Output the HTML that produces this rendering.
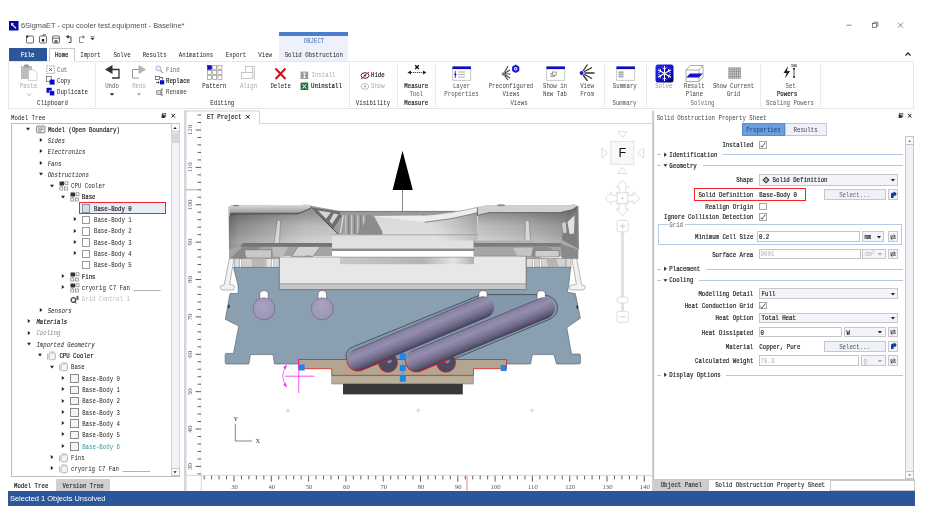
<!DOCTYPE html>
<html><head><meta charset="utf-8"><title>6SigmaET - cpu cooler test.equipment - Baseline*</title>
<style>
html,body{margin:0;padding:0;background:#fff;}
body{width:925px;height:511px;position:relative;overflow:hidden;filter:blur(0.5px);font-family:"Liberation Mono",monospace;}
.r{position:absolute;box-sizing:border-box;}
.t{position:absolute;height:8px;line-height:8px;font-size:5.72px;white-space:pre;font-family:"Liberation Mono",monospace;letter-spacing:0;transform:scaleY(1.33);transform-origin:50% 52%;}
.i{font-style:italic;}
.b{-webkit-text-stroke:0.16px currentColor;}
.s{font-family:"Liberation Sans",sans-serif;font-size:7px;transform:none;}
</style></head>
<body>
<svg class="r" style="left:9.0px;top:20.5px" width="10" height="10" viewBox="0 0 10 10"><rect x="0" y="0" width="9.5" height="9.5" fill="#0a0a9a"/><path d="M2 2 L5 2.5 L4 3.5 L7.5 7 L6.5 7.8 L3.2 4.3 L2.3 5.2 Z" fill="#fff"/></svg>
<span class="t s" style="left:21px;top:21.8px;color:#505050;font-size:7.4px">6SigmaET - cpu cooler test.equipment - Baseline*</span>
<svg class="r" style="left:840.0px;top:18.0px" width="70" height="14" viewBox="0 0 70 14"><g stroke="#555" stroke-width="0.7" fill="none"><path d="M6.5 7.2 H11.5"/><rect x="32.5" y="5.5" width="4" height="4"/><path d="M33.8 5.5 V4.2 H37.8 V8.2 H36.5"/><path d="M58 4.7 L63 9.7 M63 4.7 L58 9.7"/></g></svg>
<svg class="r" style="left:24.0px;top:33.0px" width="75" height="12" viewBox="0 0 75 12"><g stroke="#444" stroke-width="0.8" fill="none">
<rect x="2.5" y="3" width="7" height="7" rx="1"/><path d="M2 3.5 H4.5 M3.2 2 V5" stroke="#222"/>
<rect x="15.5" y="3" width="7" height="7" rx="1"/><path d="M19 3 V1.8 H22" /><rect x="17.8" y="6" width="2.4" height="2.6" fill="#222" stroke="none"/>
<rect x="28.5" y="3" width="7" height="7" rx="1"/><path d="M28.5 5.3 H35.5"/><rect x="30.5" y="7" width="3" height="3" fill="#666" stroke="none"/>
<path d="M43.5 3.8 H47 V9.5 H44.5" stroke="#222"/><path d="M44.6 1.8 L42 3.8 L44.6 5.8 Z" fill="#222" stroke="none"/>
<path d="M59 4 H55.5 V9.5 H59.5" stroke="#777"/><path d="M58.6 2 L61 4 L58.6 6 Z" fill="#777" stroke="none"/>
</g><path d="M66.5 5 H70.5 L68.5 7.3 Z M66.5 3.6 H70.5 V4.3 H66.5Z" fill="#333"/></svg>
<div class="r" style="left:279.3px;top:32.3px;width:69.2px;height:3.5px;background:#4a7fd0;"></div>
<div class="r" style="left:279.3px;top:35.8px;width:69.2px;height:25.2px;background:#eef1fb;"></div>
<span class="t " style="top:38.1px;color:#3a6ab8;left:214.0px;width:200px;text-align:center;">OBJECT</span>
<div class="r" style="left:8.5px;top:48.0px;width:38.0px;height:13.0px;background:#2b579a;"></div>
<span class="t b" style="top:52.3px;color:#fff;left:-72.5px;width:200px;text-align:center;">File</span>
<div class="r" style="left:49.0px;top:48.0px;width:25.5px;height:14.0px;background:#fff;border:0.7px solid #c8c8c8;border-bottom:none;"></div>
<span class="t b" style="top:52.3px;color:#222;left:-38.3px;width:200px;text-align:center;">Home</span>
<span class="t " style="top:52.3px;color:#222;left:-9.5px;width:200px;text-align:center;">Import</span>
<span class="t " style="top:52.3px;color:#222;left:22.0px;width:200px;text-align:center;">Solve</span>
<span class="t " style="top:52.3px;color:#222;left:54.7px;width:200px;text-align:center;">Results</span>
<span class="t " style="top:52.3px;color:#222;left:96.0px;width:200px;text-align:center;">Animations</span>
<span class="t " style="top:52.3px;color:#222;left:136.0px;width:200px;text-align:center;">Export</span>
<span class="t " style="top:52.3px;color:#222;left:165.2px;width:200px;text-align:center;">View</span>
<span class="t " style="top:52.3px;color:#222;left:213.8px;width:200px;text-align:center;">Solid Obstruction</span>
<svg class="r" style="left:903.2px;top:50.0px" width="10" height="8" viewBox="0 0 10 8"><path d="M2.5 5.6 L5 3 L7.5 5.6" stroke="#222" stroke-width="1.3" fill="none"/></svg>
<div class="r" style="left:8.2px;top:61.3px;width:905.8px;height:47.3px;background:#fff;border:0.7px solid #e6e6e6;"></div>
<div class="r" style="left:49.5px;top:60.8px;width:24.5px;height:1.5px;background:#fff;"></div>
<div class="r" style="left:95.0px;top:63.0px;width:0.7px;height:44.0px;background:#ebebeb;"></div>
<div class="r" style="left:349.4px;top:63.0px;width:0.7px;height:44.0px;background:#ebebeb;"></div>
<div class="r" style="left:397.0px;top:63.0px;width:0.7px;height:44.0px;background:#ebebeb;"></div>
<div class="r" style="left:435.0px;top:63.0px;width:0.7px;height:44.0px;background:#ebebeb;"></div>
<div class="r" style="left:603.5px;top:63.0px;width:0.7px;height:44.0px;background:#ebebeb;"></div>
<div class="r" style="left:645.6px;top:63.0px;width:0.7px;height:44.0px;background:#ebebeb;"></div>
<div class="r" style="left:759.6px;top:63.0px;width:0.7px;height:44.0px;background:#ebebeb;"></div>
<div class="r" style="left:820.0px;top:63.0px;width:0.7px;height:44.0px;background:#ebebeb;"></div>
<svg class="r" style="left:20.0px;top:63.0px" width="20" height="20" viewBox="0 0 20 20"><rect x="1" y="3" width="11" height="13" fill="#bdbdbd"/><rect x="4" y="1.5" width="5" height="3" rx="1" fill="#9a9a9a"/>
<path d="M8.5 7 H14 L17 10 V17.5 H8.5 Z" fill="#fff" stroke="#c0c0c0" stroke-width="0.7"/></svg>
<span class="t " style="top:82.6px;color:#aaa;left:-71.5px;width:200px;text-align:center;">Paste</span>
<svg class="r" style="left:25.5px;top:92.0px" width="6" height="5" viewBox="0 0 6 5"><path d="M1 1.5 L3 3.8 L5 1.5" fill="none" stroke="#aaa" stroke-width="0.8"/></svg>
<svg class="r" style="left:46.0px;top:64.5px" width="10" height="10" viewBox="0 0 10 10"><rect x="0.8" y="0.8" width="7.6" height="7.6" fill="#fff" stroke="#777" stroke-width="0.7" stroke-dasharray="1.2 0.8"/><path d="M3.3 3.3 L5.9 5.9 M5.9 3.3 L3.3 5.9" stroke="#d02020" stroke-width="1"/></svg>
<span class="t " style="top:66.5px;color:#666;left:57.0px;">Cut</span>
<svg class="r" style="left:46.0px;top:76.0px" width="10" height="10" viewBox="0 0 10 10"><rect x="0.6" y="0.6" width="4.6" height="5" fill="#fff" stroke="#555" stroke-width="0.7"/><rect x="3.6" y="3.6" width="5" height="5" fill="#0a0acc"/></svg>
<span class="t " style="top:78.1px;color:#222;left:57.0px;">Copy</span>
<svg class="r" style="left:46.0px;top:87.0px" width="10" height="10" viewBox="0 0 10 10"><rect x="0.5" y="0.8" width="5.2" height="5" fill="#0a0acc"/><rect x="3.6" y="3.8" width="5" height="5" fill="#0a0acc" stroke="#fff" stroke-width="0.5"/></svg>
<span class="t " style="top:89.1px;color:#222;left:57.0px;">Duplicate</span>
<span class="t " style="top:100.2px;color:#222;left:-47.5px;width:200px;text-align:center;">Clipboard</span>
<svg class="r" style="left:103.0px;top:64.0px" width="18" height="17" viewBox="0 0 18 17"><path d="M9 5.5 H16 V14 H9" fill="none" stroke="#333" stroke-width="1.3"/><path d="M9.5 1 L2 5.5 L9.5 10 Z" fill="#333"/></svg>
<span class="t " style="top:82.6px;color:#555;left:12.0px;width:200px;text-align:center;">Undo</span>
<svg class="r" style="left:109.0px;top:92.0px" width="6" height="5" viewBox="0 0 6 5"><path d="M0.8 1.2 H5.2 L3 3.8 Z" fill="#222"/></svg>
<svg class="r" style="left:130.0px;top:64.0px" width="18" height="17" viewBox="0 0 18 17"><path d="M9 5.5 H2.5 V14 H9" fill="none" stroke="#999" stroke-width="1"/><path d="M9 1.5 L15.5 5.5 L9 9.5 Z" fill="#b4b4b4" stroke="#aaa" stroke-width="0.6"/></svg>
<span class="t " style="top:82.6px;color:#aaa;left:39.0px;width:200px;text-align:center;">Redo</span>
<svg class="r" style="left:136.0px;top:92.0px" width="6" height="5" viewBox="0 0 6 5"><path d="M0.8 1.2 H5.2 L3 3.8 Z" fill="#aaa"/></svg>
<svg class="r" style="left:155.0px;top:65.0px" width="9" height="9" viewBox="0 0 9 9"><circle cx="3.4" cy="3.4" r="2.5" fill="#e8f0ff" stroke="#8aa8d8" stroke-width="0.8"/><path d="M5.3 5.3 L8 8" stroke="#999" stroke-width="1.1"/></svg>
<span class="t " style="top:66.5px;color:#666;left:166.0px;">Find</span>
<svg class="r" style="left:154.5px;top:76.0px" width="10" height="10" viewBox="0 0 10 10"><rect x="0.5" y="0.5" width="4" height="3" fill="#fff" stroke="#444" stroke-width="0.7"/><rect x="5" y="4.2" width="4.2" height="4.2" fill="#0a0acc"/><path d="M5 1.5 H7.5 V3.5 M1 6.5 H4 M3 5.3 L4.3 6.5 L3 7.7" stroke="#222" stroke-width="0.7" fill="none"/></svg>
<span class="t b" style="top:78.3px;color:#222;left:166.0px;">Replace</span>
<svg class="r" style="left:156.0px;top:88.0px" width="8" height="8" viewBox="0 0 8 8"><rect x="0.8" y="2.8" width="4" height="3.6" fill="#ddd" stroke="#555" stroke-width="0.6"/><path d="M5.8 1 V7.2 M4.8 1 H6.8 M4.8 7.2 H6.8" stroke="#333" stroke-width="0.6"/></svg>
<span class="t " style="top:89.0px;color:#444;left:166.0px;">Rename</span>
<svg class="r" style="left:207.0px;top:65.0px" width="16" height="16" viewBox="0 0 16 16"><rect x="0.5" y="0.5" width="4" height="3.8" fill="#0a0acc" stroke="#0a0acc" stroke-width="0.6"/><rect x="0.5" y="5.5" width="4" height="3.8" fill="#fff" stroke="#888" stroke-width="0.6"/><rect x="0.5" y="10.5" width="4" height="3.8" fill="#fff" stroke="#888" stroke-width="0.6"/><rect x="5.7" y="0.5" width="4" height="3.8" fill="#fff" stroke="#888" stroke-width="0.6"/><rect x="5.7" y="5.5" width="4" height="3.8" fill="#fff" stroke="#888" stroke-width="0.6"/><rect x="5.7" y="10.5" width="4" height="3.8" fill="#fff" stroke="#888" stroke-width="0.6"/><rect x="10.9" y="0.5" width="4" height="3.8" fill="#fff" stroke="#888" stroke-width="0.6"/><rect x="10.9" y="5.5" width="4" height="3.8" fill="#fff" stroke="#888" stroke-width="0.6"/><rect x="10.9" y="10.5" width="4" height="3.8" fill="#fff" stroke="#888" stroke-width="0.6"/></svg>
<span class="t " style="top:82.6px;color:#222;left:114.3px;width:200px;text-align:center;">Pattern</span>
<svg class="r" style="left:240.0px;top:65.0px" width="16" height="16" viewBox="0 0 16 16"><rect x="5.5" y="1.5" width="7" height="6" fill="#fff" stroke="#bbb" stroke-width="0.8"/><rect x="1.5" y="7.5" width="11" height="6" fill="#fff" stroke="#bbb" stroke-width="0.8"/><path d="M14.3 0.5 V15" stroke="#bbb" stroke-width="0.9"/></svg>
<span class="t " style="top:82.6px;color:#aaa;left:148.5px;width:200px;text-align:center;">Align</span>
<svg class="r" style="left:274.0px;top:66.5px" width="14" height="14" viewBox="0 0 14 14"><path d="M1.5 1.5 L11.5 12 M11.5 1.5 L1.5 12" stroke="#c01818" stroke-width="2.1"/></svg>
<span class="t " style="top:82.6px;color:#222;left:180.7px;width:200px;text-align:center;">Delete</span>
<svg class="r" style="left:300.0px;top:71.0px" width="9" height="9" viewBox="0 0 9 9"><rect x="0.6" y="0.6" width="7.6" height="7.4" fill="#999"/><path d="M3 2.2 H5.8 M4.4 2.2 V6.4 M3 6.4 H5.8" stroke="#fff" stroke-width="0.9"/></svg>
<span class="t " style="top:72.1px;color:#aaa;left:311.5px;">Install</span>
<svg class="r" style="left:300.0px;top:82.3px" width="9" height="9" viewBox="0 0 9 9"><rect x="0.6" y="0.6" width="7.6" height="7.4" fill="#1e7a3c"/><path d="M2.6 2.3 L6.2 6.5 M6.2 2.3 L2.6 6.5" stroke="#fff" stroke-width="1"/></svg>
<span class="t b" style="top:83.3px;color:#222;left:311.0px;">Uninstall</span>
<span class="t " style="top:100.2px;color:#222;left:122.3px;width:200px;text-align:center;">Editing</span>
<svg class="r" style="left:359.5px;top:70.5px" width="10" height="9" viewBox="0 0 10 9"><ellipse cx="5" cy="4.5" rx="4" ry="2.8" fill="none" stroke="#222" stroke-width="0.9"/><circle cx="5" cy="4.5" r="1.1" fill="#222"/><path d="M1 8 L9 1" stroke="#d02020" stroke-width="1"/></svg>
<span class="t b" style="top:72.1px;color:#222;left:371.0px;">Hide</span>
<svg class="r" style="left:359.5px;top:81.8px" width="10" height="9" viewBox="0 0 10 9"><ellipse cx="5" cy="4.5" rx="4" ry="2.8" fill="none" stroke="#aaa" stroke-width="0.8"/><circle cx="5" cy="4.5" r="1.1" fill="#aaa"/></svg>
<span class="t " style="top:83.3px;color:#aaa;left:371.0px;">Show</span>
<span class="t " style="top:100.2px;color:#222;left:273.0px;width:200px;text-align:center;">Visibility</span>
<svg class="r" style="left:406.0px;top:64.0px" width="22" height="14" viewBox="0 0 22 14"><path d="M3 8.5 H19" stroke="#222" stroke-width="0.8" stroke-dasharray="1.3 0.7"/><path d="M1.5 8.5 L5 6.5 V10.5 Z M20.5 8.5 L17 6.5 V10.5 Z" fill="#222"/><path d="M9.2 1.2 L12.8 5 M12.8 1.2 L9.2 5" stroke="#111" stroke-width="1.3"/></svg>
<span class="t b" style="top:82.6px;color:#222;left:316.3px;width:200px;text-align:center;">Measure</span>
<span class="t " style="top:90.6px;color:#555;left:316.3px;width:200px;text-align:center;">Tool</span>
<span class="t b" style="top:100.2px;color:#222;left:316.3px;width:200px;text-align:center;">Measure</span>
<svg class="r" style="left:452.0px;top:65.5px" width="20" height="16" viewBox="0 0 20 16"><rect x="0.7" y="0.7" width="18" height="13.6" fill="#fff" stroke="#bbb" stroke-width="0.8"/><rect x="0.5" y="0.5" width="18.4" height="2.6" fill="#0a0acc"/><path d="M6 6 H13 M6 8.5 H13 M6 11 H13" stroke="#999" stroke-width="0.8"/><path d="M3.3 5 V12" stroke="#0a0acc" stroke-width="0.8"/><rect x="2.5" y="7.5" width="1.8" height="1.8" fill="#0a0acc"/></svg>
<span class="t " style="top:82.6px;color:#555;left:361.5px;width:200px;text-align:center;">Layer</span>
<span class="t " style="top:90.6px;color:#555;left:361.5px;width:200px;text-align:center;">Properties</span>
<svg class="r" style="left:500.0px;top:63.0px" width="22" height="18" viewBox="0 0 22 18"><g stroke="#444" stroke-width="1.1"><path d="M4.5 9.5 L8 3 M5 10 L10 7 M5 11 L10.5 11 M5 12 L10 15 M4.5 12.5 L8 17"/></g><circle cx="3.5" cy="11" r="1.8" fill="#777"/>
<polygon points="15.7,1.6 19.3,3.7 19.3,7.9 15.7,10 12.1,7.9 12.1,3.7" fill="#1a1ae0"/><circle cx="15.7" cy="5.8" r="1.7" fill="#fff"/><circle cx="15.7" cy="5.8" r="0.8" fill="#1a1ae0"/></svg>
<span class="t " style="top:82.6px;color:#444;left:411.0px;width:200px;text-align:center;">Preconfigured</span>
<span class="t " style="top:90.6px;color:#444;left:411.0px;width:200px;text-align:center;">Views</span>
<svg class="r" style="left:545.5px;top:65.5px" width="20" height="16" viewBox="0 0 20 16"><rect x="0.7" y="0.7" width="18" height="13.6" fill="#fff" stroke="#bbb" stroke-width="0.8"/><rect x="0.5" y="0.5" width="18.4" height="2.6" fill="#0a0acc"/><rect x="5" y="7.5" width="3.6" height="3.2" fill="none" stroke="#777" stroke-width="0.7"/><rect x="6.5" y="6" width="3.6" height="3.2" fill="#fff" stroke="#777" stroke-width="0.7"/></svg>
<span class="t " style="top:82.6px;color:#444;left:455.0px;width:200px;text-align:center;">Show in</span>
<span class="t " style="top:90.6px;color:#444;left:455.0px;width:200px;text-align:center;">New Tab</span>
<svg class="r" style="left:578.0px;top:63.0px" width="20" height="18" viewBox="0 0 20 18"><g stroke="#333" stroke-width="1.3"><path d="M5 8 L9.5 1.5 M6 8.8 L14 4.5 M6.5 10 L16.5 10 M6 11.2 L14 15.5 M5 12 L9.5 18"/></g><circle cx="3.6" cy="10" r="2" fill="#1a1ae0"/></svg>
<span class="t " style="top:82.6px;color:#444;left:487.0px;width:200px;text-align:center;">View</span>
<span class="t " style="top:90.6px;color:#444;left:487.0px;width:200px;text-align:center;">From</span>
<span class="t " style="top:100.2px;color:#444;left:419.0px;width:200px;text-align:center;">Views</span>
<svg class="r" style="left:615.5px;top:65.5px" width="20" height="16" viewBox="0 0 20 16"><rect x="0.7" y="0.7" width="18" height="13.6" fill="#fff" stroke="#bbb" stroke-width="0.8"/><rect x="0.5" y="0.5" width="18.4" height="2.6" fill="#0a0acc"/><rect x="2.5" y="5" width="5" height="7" fill="#ccc"/><path d="M2.5 6.5 H7.5 M2.5 8.5 H7.5 M2.5 10.5 H7.5" stroke="#999" stroke-width="0.6"/></svg>
<span class="t " style="top:82.6px;color:#444;left:524.8px;width:200px;text-align:center;">Summary</span>
<span class="t " style="top:100.2px;color:#555;left:524.5px;width:200px;text-align:center;">Summary</span>
<svg class="r" style="left:654.5px;top:63.5px" width="20" height="20" viewBox="0 0 20 20"><defs><linearGradient id="sg" x1="0" y1="0" x2="1" y2="1"><stop offset="0" stop-color="#2a2af0"/><stop offset="0.6" stop-color="#1010c0"/><stop offset="1" stop-color="#000050"/></linearGradient></defs>
<rect x="0.5" y="0.5" width="18" height="18" rx="2.5" fill="url(#sg)"/>
<g stroke="#fff" stroke-width="1.1" fill="none"><path d="M9.5 2 V17 M3 5.8 L16 13.2 M16 5.8 L3 13.2"/><path d="M7.5 3.6 L9.5 5.4 L11.5 3.6 M7.5 15.4 L9.5 13.6 L11.5 15.4 M3.4 8.6 L5.8 7.4 L5.2 4.8 M15.6 8.6 L13.2 7.4 L13.8 4.8 M3.4 10.4 L5.8 11.6 L5.2 14.2 M15.6 10.4 L13.2 11.6 L13.8 14.2" stroke-width="0.8"/></g></svg>
<span class="t " style="top:82.6px;color:#999;left:563.8px;width:200px;text-align:center;">Solve</span>
<svg class="r" style="left:685.0px;top:63.5px" width="20" height="19" viewBox="0 0 20 19"><g stroke="#888" stroke-width="0.7" fill="#fff"><path d="M1 6 L5 1.5 H18 V13 L14 17.5 H1 Z"/><path d="M1 6 H14 V17.5 M14 6 L18 1.5" fill="none"/></g><path d="M1.3 13.5 L5 9.5 H17.7 L14 13.5 Z" fill="#1010d0"/></svg>
<span class="t " style="top:82.6px;color:#444;left:594.3px;width:200px;text-align:center;">Result</span>
<span class="t " style="top:90.6px;color:#444;left:594.3px;width:200px;text-align:center;">Plane</span>
<svg class="r" style="left:727.5px;top:66.8px" width="13" height="12" viewBox="0 0 13 12"><g stroke="#858585" stroke-width="0.8"><path d="M1.0 0.5 V11.5" /><path d="M2.9 0.5 V11.5" /><path d="M4.8 0.5 V11.5" /><path d="M6.7 0.5 V11.5" /><path d="M8.6 0.5 V11.5" /><path d="M10.5 0.5 V11.5" /><path d="M12.4 0.5 V11.5" /><path d="M0.5 1.0 H12.5" /><path d="M0.5 2.7 H12.5" /><path d="M0.5 4.4 H12.5" /><path d="M0.5 6.1 H12.5" /><path d="M0.5 7.8 H12.5" /><path d="M0.5 9.5 H12.5" /><path d="M0.5 11.2 H12.5" /></g></svg>
<span class="t " style="top:82.6px;color:#444;left:633.5px;width:200px;text-align:center;">Show Current</span>
<span class="t " style="top:90.6px;color:#444;left:633.5px;width:200px;text-align:center;">Grid</span>
<span class="t " style="top:100.2px;color:#666;left:602.5px;width:200px;text-align:center;">Solving</span>
<svg class="r" style="left:781.0px;top:63.5px" width="18" height="16" viewBox="0 0 18 16"><path d="M7 2 L2.5 9 H5.5 L4 14.5 L9 7 H6 Z" fill="#222"/><path d="M13 4.5 V13" stroke="#222" stroke-width="0.8"/><circle cx="13" cy="4.8" r="1" fill="#222"/><circle cx="13" cy="13" r="1" fill="#222"/><text x="10" y="3.2" font-size="3.6" font-family="Liberation Sans,sans-serif" font-weight="bold" fill="#222">100</text></svg>
<span class="t " style="top:82.6px;color:#555;left:690.7px;width:200px;text-align:center;">Set</span>
<span class="t b" style="top:90.6px;color:#222;left:687.2px;width:200px;text-align:center;">Powers</span>
<span class="t " style="top:100.2px;color:#555;left:690.0px;width:200px;text-align:center;">Scaling Powers</span>
<span class="t " style="top:114.6px;color:#222;left:11.0px;">Model Tree</span>
<svg class="r" style="left:160.0px;top:111.6px" width="20" height="8" viewBox="0 0 20 8"><rect x="1.6" y="2.6" width="3.2" height="3.4" fill="#333"/><rect x="2.6" y="1.4" width="3.2" height="3.4" fill="none" stroke="#333" stroke-width="0.6"/><path d="M11.5 1.8 L15 5.6 M15 1.8 L11.5 5.6" stroke="#222" stroke-width="1"/></svg>
<div class="r" style="left:11.3px;top:122.5px;width:169.0px;height:354.5px;background:#fff;border:0.7px solid #bdbdbd;"></div>
<div class="r" style="left:170.6px;top:123.2px;width:9.4px;height:353.1px;background:#f2f3f7;border:0.5px solid #d4d4d8;"></div>
<div class="r" style="left:170.6px;top:123.2px;width:9.4px;height:9.3px;background:#fbfbfd;border:0.6px solid #c8c8cc;"></div>
<svg class="r" style="left:171.3px;top:123.8px" width="8" height="8" viewBox="0 0 8 8"><path d="M2.3 5 H5.7 L4 3 Z" fill="#222"/></svg>
<div class="r" style="left:170.6px;top:132.5px;width:9.4px;height:10.8px;background:#d6d8de;"></div>
<div class="r" style="left:170.6px;top:467.5px;width:9.4px;height:8.8px;background:#fbfbfd;border:0.6px solid #c8c8cc;"></div>
<svg class="r" style="left:171.3px;top:468.0px" width="8" height="8" viewBox="0 0 8 8"><path d="M2.3 3.2 H5.7 L4 5.2 Z" fill="#222"/></svg>
<div class="r" style="left:78.8px;top:202.1px;width:87.0px;height:11.5px;background:#e6ecf5;border:1.6px solid #f62424;"></div>
<svg class="r" style="left:25.2px;top:126.0px" width="6" height="6" viewBox="0 0 6 6"><path d="M1 1.8 H5 L3 4.4 Z" fill="#222"/></svg>
<svg class="r" style="left:36.0px;top:124.9px" width="10" height="9" viewBox="0 0 10 9"><rect x="0.6" y="1" width="8.4" height="6.8" rx="1" fill="#eee" stroke="#555" stroke-width="0.7"/><path d="M2.2 3 H7.4 M2.2 4.6 H7.4 M2.2 6.2 H5.5" stroke="#555" stroke-width="0.6"/></svg>
<span class="t  b" style="top:126.5px;color:#222;left:47.9px;">Model (Open Boundary)</span>
<svg class="r" style="left:37.5px;top:137.1px" width="6" height="6" viewBox="0 0 6 6"><path d="M1.8 1 V5 L4.4 3 Z" fill="#222"/></svg>
<span class="t  i" style="top:137.8px;color:#222;left:47.7px;">Sides</span>
<svg class="r" style="left:37.5px;top:148.4px" width="6" height="6" viewBox="0 0 6 6"><path d="M1.8 1 V5 L4.4 3 Z" fill="#222"/></svg>
<span class="t  i" style="top:149.1px;color:#222;left:47.7px;">Electronics</span>
<svg class="r" style="left:37.5px;top:159.8px" width="6" height="6" viewBox="0 0 6 6"><path d="M1.8 1 V5 L4.4 3 Z" fill="#222"/></svg>
<span class="t  i" style="top:160.5px;color:#222;left:47.7px;">Fans</span>
<svg class="r" style="left:37.5px;top:171.3px" width="6" height="6" viewBox="0 0 6 6"><path d="M1 1.8 H5 L3 4.4 Z" fill="#222"/></svg>
<span class="t  i" style="top:171.8px;color:#222;left:47.7px;">Obstructions</span>
<svg class="r" style="left:48.9px;top:182.6px" width="6" height="6" viewBox="0 0 6 6"><path d="M1 1.8 H5 L3 4.4 Z" fill="#222"/></svg>
<svg class="r" style="left:58.7px;top:181.0px" width="10" height="10" viewBox="0 0 10 10"><rect x="0.5" y="0.5" width="4.5" height="4" fill="#333"/><rect x="6" y="0.8" width="3" height="3" fill="#fff" stroke="#666" stroke-width="0.6"/><rect x="0.8" y="6" width="3" height="3" fill="#fff" stroke="#666" stroke-width="0.6"/><rect x="5.6" y="6" width="3" height="3" fill="#fff" stroke="#666" stroke-width="0.6"/><path d="M2.5 4.5 V6 M5 2.3 H6" stroke="#666" stroke-width="0.5"/></svg>
<span class="t " style="top:183.1px;color:#222;left:71.0px;">CPU Cooler</span>
<svg class="r" style="left:60.1px;top:193.9px" width="6" height="6" viewBox="0 0 6 6"><path d="M1 1.8 H5 L3 4.4 Z" fill="#222"/></svg>
<svg class="r" style="left:69.5px;top:192.3px" width="10" height="10" viewBox="0 0 10 10"><rect x="0.5" y="0.5" width="4.5" height="4" fill="#333"/><rect x="6" y="0.8" width="3" height="3" fill="#fff" stroke="#666" stroke-width="0.6"/><rect x="0.8" y="6" width="3" height="3" fill="#fff" stroke="#666" stroke-width="0.6"/><rect x="5.6" y="6" width="3" height="3" fill="#fff" stroke="#666" stroke-width="0.6"/><path d="M2.5 4.5 V6 M5 2.3 H6" stroke="#666" stroke-width="0.5"/></svg>
<span class="t  b" style="top:194.4px;color:#222;left:81.8px;">Base</span>
<div class="r" style="left:81.5px;top:204.3px;width:8.5px;height:8.5px;background:#d4dde8;border:0.7px solid #8a96a8;"></div>
<span class="t  b" style="top:205.7px;color:#222;left:94.0px;">Base-Body 0</span>
<svg class="r" style="left:71.5px;top:216.4px" width="6" height="6" viewBox="0 0 6 6"><path d="M1.8 1 V5 L4.4 3 Z" fill="#222"/></svg>
<div class="r" style="left:81.5px;top:215.7px;width:8.5px;height:8.5px;background:#fff;border:0.7px solid #9a9a9a;"></div>
<span class="t " style="top:217.1px;color:#222;left:94.0px;">Base-Body 1</span>
<svg class="r" style="left:71.5px;top:227.7px" width="6" height="6" viewBox="0 0 6 6"><path d="M1.8 1 V5 L4.4 3 Z" fill="#222"/></svg>
<div class="r" style="left:81.5px;top:227.0px;width:8.5px;height:8.5px;background:#fff;border:0.7px solid #9a9a9a;"></div>
<span class="t " style="top:228.4px;color:#222;left:94.0px;">Base-Body 2</span>
<svg class="r" style="left:71.5px;top:239.0px" width="6" height="6" viewBox="0 0 6 6"><path d="M1.8 1 V5 L4.4 3 Z" fill="#222"/></svg>
<div class="r" style="left:81.5px;top:238.3px;width:8.5px;height:8.5px;background:#fff;border:0.7px solid #9a9a9a;"></div>
<span class="t " style="top:239.7px;color:#222;left:94.0px;">Base-Body 3</span>
<svg class="r" style="left:71.5px;top:250.3px" width="6" height="6" viewBox="0 0 6 6"><path d="M1.8 1 V5 L4.4 3 Z" fill="#222"/></svg>
<div class="r" style="left:81.5px;top:249.6px;width:8.5px;height:8.5px;background:#fff;border:0.7px solid #9a9a9a;"></div>
<span class="t " style="top:251.0px;color:#222;left:94.0px;">Base-Body 4</span>
<div class="r" style="left:81.5px;top:260.9px;width:8.5px;height:8.5px;background:#fff;border:0.7px solid #9a9a9a;"></div>
<span class="t " style="top:262.3px;color:#222;left:94.0px;">Base-Body 5</span>
<svg class="r" style="left:60.1px;top:273.0px" width="6" height="6" viewBox="0 0 6 6"><path d="M1.8 1 V5 L4.4 3 Z" fill="#222"/></svg>
<svg class="r" style="left:69.5px;top:271.6px" width="10" height="10" viewBox="0 0 10 10"><rect x="0.5" y="0.5" width="4.5" height="4" fill="#333"/><rect x="6" y="0.8" width="3" height="3" fill="#fff" stroke="#666" stroke-width="0.6"/><rect x="0.8" y="6" width="3" height="3" fill="#fff" stroke="#666" stroke-width="0.6"/><rect x="5.6" y="6" width="3" height="3" fill="#fff" stroke="#666" stroke-width="0.6"/><path d="M2.5 4.5 V6 M5 2.3 H6" stroke="#666" stroke-width="0.5"/></svg>
<span class="t  b" style="top:273.7px;color:#222;left:81.8px;">Fins</span>
<svg class="r" style="left:60.1px;top:284.3px" width="6" height="6" viewBox="0 0 6 6"><path d="M1.8 1 V5 L4.4 3 Z" fill="#222"/></svg>
<svg class="r" style="left:69.5px;top:282.9px" width="10" height="10" viewBox="0 0 10 10"><rect x="0.5" y="0.5" width="4.5" height="4" fill="#333"/><rect x="6" y="0.8" width="3" height="3" fill="#fff" stroke="#666" stroke-width="0.6"/><rect x="0.8" y="6" width="3" height="3" fill="#fff" stroke="#666" stroke-width="0.6"/><rect x="5.6" y="6" width="3" height="3" fill="#fff" stroke="#666" stroke-width="0.6"/><path d="M2.5 4.5 V6 M5 2.3 H6" stroke="#666" stroke-width="0.5"/></svg>
<span class="t " style="top:285.0px;color:#222;left:81.8px;">cryorig C7 Fan ________</span>
<svg class="r" style="left:69.5px;top:294.7px" width="10" height="9" viewBox="0 0 10 9"><circle cx="3.4" cy="5" r="2.3" fill="none" stroke="#444" stroke-width="1.3"/><path d="M6 2 H9 M6 3.8 H9 M7.5 0.8 V5" stroke="#444" stroke-width="0.8"/><path d="M4.5 7 L6.5 8.5" stroke="#444" stroke-width="0.9"/></svg>
<span class="t " style="top:296.3px;color:#bbb;left:81.8px;">Grid Control 1</span>
<svg class="r" style="left:37.5px;top:306.9px" width="6" height="6" viewBox="0 0 6 6"><path d="M1.8 1 V5 L4.4 3 Z" fill="#222"/></svg>
<span class="t  i" style="top:307.6px;color:#222;left:47.7px;">Sensors</span>
<svg class="r" style="left:25.5px;top:318.2px" width="6" height="6" viewBox="0 0 6 6"><path d="M1.8 1 V5 L4.4 3 Z" fill="#222"/></svg>
<span class="t  i b" style="top:318.9px;color:#222;left:36.4px;">Materials</span>
<svg class="r" style="left:25.5px;top:329.6px" width="6" height="6" viewBox="0 0 6 6"><path d="M1.8 1 V5 L4.4 3 Z" fill="#222"/></svg>
<span class="t  i" style="top:330.3px;color:#888;left:36.4px;">Cooling</span>
<svg class="r" style="left:25.5px;top:341.1px" width="6" height="6" viewBox="0 0 6 6"><path d="M1 1.8 H5 L3 4.4 Z" fill="#222"/></svg>
<span class="t  i" style="top:341.6px;color:#222;left:36.4px;">Imported Geometry</span>
<svg class="r" style="left:37.1px;top:352.4px" width="6" height="6" viewBox="0 0 6 6"><path d="M1 1.8 H5 L3 4.4 Z" fill="#222"/></svg>
<svg class="r" style="left:47.4px;top:350.8px" width="10" height="10" viewBox="0 0 10 10"><rect x="2" y="1.8" width="6.4" height="7" rx="1.5" fill="#f4f4f4" stroke="#999" stroke-width="0.7"/><path d="M2.5 0.8 H8" stroke="#aaa" stroke-width="0.6"/><path d="M0.6 2.5 V8.5" stroke="#888" stroke-width="0.6"/></svg>
<span class="t  b" style="top:352.9px;color:#222;left:59.4px;">CPU Cooler</span>
<svg class="r" style="left:48.5px;top:363.7px" width="6" height="6" viewBox="0 0 6 6"><path d="M1 1.8 H5 L3 4.4 Z" fill="#222"/></svg>
<svg class="r" style="left:59.0px;top:362.1px" width="10" height="10" viewBox="0 0 10 10"><rect x="2" y="1.8" width="6.4" height="7" rx="1.5" fill="#f4f4f4" stroke="#999" stroke-width="0.7"/><path d="M2.5 0.8 H8" stroke="#aaa" stroke-width="0.6"/><path d="M0.6 2.5 V8.5" stroke="#888" stroke-width="0.6"/></svg>
<span class="t " style="top:364.2px;color:#222;left:71.0px;">Base</span>
<svg class="r" style="left:59.9px;top:374.8px" width="6" height="6" viewBox="0 0 6 6"><path d="M1.8 1 V5 L4.4 3 Z" fill="#222"/></svg>
<div class="r" style="left:70.3px;top:374.1px;width:8.5px;height:8.5px;background:#f4f4f4;border:0.7px solid #8a8a8a;"></div>
<span class="t " style="top:375.5px;color:#222;left:82.2px;">Base-Body 0</span>
<svg class="r" style="left:59.9px;top:386.2px" width="6" height="6" viewBox="0 0 6 6"><path d="M1.8 1 V5 L4.4 3 Z" fill="#222"/></svg>
<div class="r" style="left:70.3px;top:385.5px;width:8.5px;height:8.5px;background:#f4f4f4;border:0.7px solid #8a8a8a;"></div>
<span class="t " style="top:386.9px;color:#222;left:82.2px;">Base-Body 1</span>
<svg class="r" style="left:59.9px;top:397.5px" width="6" height="6" viewBox="0 0 6 6"><path d="M1.8 1 V5 L4.4 3 Z" fill="#222"/></svg>
<div class="r" style="left:70.3px;top:396.8px;width:8.5px;height:8.5px;background:#f4f4f4;border:0.7px solid #8a8a8a;"></div>
<span class="t " style="top:398.2px;color:#222;left:82.2px;">Base-Body 2</span>
<svg class="r" style="left:59.9px;top:408.8px" width="6" height="6" viewBox="0 0 6 6"><path d="M1.8 1 V5 L4.4 3 Z" fill="#222"/></svg>
<div class="r" style="left:70.3px;top:408.1px;width:8.5px;height:8.5px;background:#f4f4f4;border:0.7px solid #8a8a8a;"></div>
<span class="t " style="top:409.5px;color:#222;left:82.2px;">Base-Body 3</span>
<svg class="r" style="left:59.9px;top:420.1px" width="6" height="6" viewBox="0 0 6 6"><path d="M1.8 1 V5 L4.4 3 Z" fill="#222"/></svg>
<div class="r" style="left:70.3px;top:419.4px;width:8.5px;height:8.5px;background:#f4f4f4;border:0.7px solid #8a8a8a;"></div>
<span class="t " style="top:420.8px;color:#222;left:82.2px;">Base-Body 4</span>
<svg class="r" style="left:59.9px;top:431.4px" width="6" height="6" viewBox="0 0 6 6"><path d="M1.8 1 V5 L4.4 3 Z" fill="#222"/></svg>
<div class="r" style="left:70.3px;top:430.7px;width:8.5px;height:8.5px;background:#f4f4f4;border:0.7px solid #8a8a8a;"></div>
<span class="t " style="top:432.1px;color:#222;left:82.2px;">Base-Body 5</span>
<svg class="r" style="left:59.9px;top:442.8px" width="6" height="6" viewBox="0 0 6 6"><path d="M1.8 1 V5 L4.4 3 Z" fill="#222"/></svg>
<div class="r" style="left:70.3px;top:442.1px;width:8.5px;height:8.5px;background:#f4f4f4;border:0.7px solid #8a8a8a;"></div>
<span class="t " style="top:443.5px;color:#2a9a9a;left:82.2px;">Base-Body 6</span>
<svg class="r" style="left:48.5px;top:454.1px" width="6" height="6" viewBox="0 0 6 6"><path d="M1.8 1 V5 L4.4 3 Z" fill="#222"/></svg>
<svg class="r" style="left:59.0px;top:452.7px" width="10" height="10" viewBox="0 0 10 10"><rect x="2" y="1.8" width="6.4" height="7" rx="1.5" fill="#f4f4f4" stroke="#999" stroke-width="0.7"/><path d="M2.5 0.8 H8" stroke="#aaa" stroke-width="0.6"/><path d="M0.6 2.5 V8.5" stroke="#888" stroke-width="0.6"/></svg>
<span class="t " style="top:454.8px;color:#222;left:71.0px;">Fins</span>
<svg class="r" style="left:48.5px;top:465.4px" width="6" height="6" viewBox="0 0 6 6"><path d="M1.8 1 V5 L4.4 3 Z" fill="#222"/></svg>
<svg class="r" style="left:59.0px;top:464.0px" width="10" height="10" viewBox="0 0 10 10"><rect x="2" y="1.8" width="6.4" height="7" rx="1.5" fill="#f4f4f4" stroke="#999" stroke-width="0.7"/><path d="M2.5 0.8 H8" stroke="#aaa" stroke-width="0.6"/><path d="M0.6 2.5 V8.5" stroke="#888" stroke-width="0.6"/></svg>
<span class="t " style="top:466.1px;color:#222;left:71.0px;">cryorig C7 Fan ________</span>
<span class="t b" style="top:482.5px;color:#222;left:14.0px;">Model Tree</span>
<div class="r" style="left:55.9px;top:479.4px;width:54.1px;height:11.4px;background:#d0d0d0;"></div>
<span class="t b" style="top:482.5px;color:#333;left:62.4px;">Version Tree</span>
<div class="r" style="left:8.0px;top:490.8px;width:907.0px;height:15.2px;background:#2b579a;"></div>
<span class="t s" style="left:10px;top:494.6px;color:#fff;font-size:7.45px">Selected 1 Objects Unsolved</span>
<svg class="r" style="left:183px;top:110px" width="472" height="381" viewBox="183 110 472 381"><rect x="184" y="111" width="468" height="380" fill="#fff"/><rect x="184" y="111" width="2.5" height="380" fill="#d3d6dd"/><path d="M184 111 H201" stroke="#c4c4c4" stroke-width="0.8" fill="none"/><rect x="652" y="110.5" width="2.2" height="381" fill="#cfd0d6"/><path d="M201 111 H259.5 V123.6 H652" stroke="#c8c8c8" stroke-width="0.8" fill="none"/><path d="M201.2 111 V475.4" stroke="#e4e4e4" stroke-width="0.6" fill="none"/><path d="M197.6 115.05 H201 M197.6 122.52 H201 M195.6 130.00 H201 M197.6 137.48 H201 M197.6 144.95 H201 M197.6 152.43 H201 M197.6 159.90 H201 M195.6 167.38 H201 M197.6 174.86 H201 M197.6 182.33 H201 M197.6 189.81 H201 M197.6 197.28 H201 M195.6 204.76 H201 M197.6 212.24 H201 M197.6 219.71 H201 M197.6 227.19 H201 M197.6 234.66 H201 M195.6 242.14 H201 M197.6 249.62 H201 M197.6 257.09 H201 M197.6 264.57 H201 M197.6 272.04 H201 M195.6 279.52 H201 M197.6 287.00 H201 M197.6 294.47 H201 M197.6 301.95 H201 M197.6 309.42 H201 M195.6 316.90 H201 M197.6 324.38 H201 M197.6 331.85 H201 M197.6 339.33 H201 M197.6 346.80 H201 M195.6 354.28 H201 M197.6 361.76 H201 M197.6 369.23 H201 M197.6 376.71 H201 M197.6 384.18 H201 M195.6 391.66 H201 M197.6 399.14 H201 M197.6 406.61 H201 M197.6 414.09 H201 M197.6 421.56 H201 M195.6 429.04 H201 M197.6 436.52 H201 M197.6 443.99 H201 M197.6 451.47 H201 M197.6 458.94 H201 M195.6 466.42 H201 M197.6 473.90 H201" stroke="#333" stroke-width="0.8" fill="none"/><text transform="translate(191.8 466.4) rotate(-90)" text-anchor="middle" font-size="6.8" font-family="Liberation Serif,serif" fill="#555">30</text><text transform="translate(191.8 429.0) rotate(-90)" text-anchor="middle" font-size="6.8" font-family="Liberation Serif,serif" fill="#555">40</text><text transform="translate(191.8 391.7) rotate(-90)" text-anchor="middle" font-size="6.8" font-family="Liberation Serif,serif" fill="#555">50</text><text transform="translate(191.8 354.3) rotate(-90)" text-anchor="middle" font-size="6.8" font-family="Liberation Serif,serif" fill="#555">60</text><text transform="translate(191.8 316.9) rotate(-90)" text-anchor="middle" font-size="6.8" font-family="Liberation Serif,serif" fill="#555">70</text><text transform="translate(191.8 279.5) rotate(-90)" text-anchor="middle" font-size="6.8" font-family="Liberation Serif,serif" fill="#555">80</text><text transform="translate(191.8 242.1) rotate(-90)" text-anchor="middle" font-size="6.8" font-family="Liberation Serif,serif" fill="#555">90</text><text transform="translate(191.8 204.8) rotate(-90)" text-anchor="middle" font-size="6.8" font-family="Liberation Serif,serif" fill="#555">100</text><text transform="translate(191.8 167.4) rotate(-90)" text-anchor="middle" font-size="6.8" font-family="Liberation Serif,serif" fill="#555">110</text><text transform="translate(191.8 130.0) rotate(-90)" text-anchor="middle" font-size="6.8" font-family="Liberation Serif,serif" fill="#555">120</text><path d="M186 189.8 H197.5" stroke="#f07070" stroke-width="0.8"/><path d="M186.5 475.4 H652" stroke="#c8c8c8" stroke-width="0.7"/><path d="M201.2 475.4 V491" stroke="#c8c8c8" stroke-width="0.7"/><path d="M204.16 475.8 V479.4 M211.62 475.8 V479.4 M219.08 475.8 V479.4 M226.54 475.8 V479.4 M234.00 475.8 V481.6 M241.46 475.8 V479.4 M248.92 475.8 V479.4 M256.38 475.8 V479.4 M263.84 475.8 V479.4 M271.30 475.8 V481.6 M278.76 475.8 V479.4 M286.22 475.8 V479.4 M293.68 475.8 V479.4 M301.14 475.8 V479.4 M308.60 475.8 V481.6 M316.06 475.8 V479.4 M323.52 475.8 V479.4 M330.98 475.8 V479.4 M338.44 475.8 V479.4 M345.90 475.8 V481.6 M353.36 475.8 V479.4 M360.82 475.8 V479.4 M368.28 475.8 V479.4 M375.74 475.8 V479.4 M383.20 475.8 V481.6 M390.66 475.8 V479.4 M398.12 475.8 V479.4 M405.58 475.8 V479.4 M413.04 475.8 V479.4 M420.50 475.8 V481.6 M427.96 475.8 V479.4 M435.42 475.8 V479.4 M442.88 475.8 V479.4 M450.34 475.8 V479.4 M457.80 475.8 V481.6 M465.26 475.8 V479.4 M472.72 475.8 V479.4 M480.18 475.8 V479.4 M487.64 475.8 V479.4 M495.10 475.8 V481.6 M502.56 475.8 V479.4 M510.02 475.8 V479.4 M517.48 475.8 V479.4 M524.94 475.8 V479.4 M532.40 475.8 V481.6 M539.86 475.8 V479.4 M547.32 475.8 V479.4 M554.78 475.8 V479.4 M562.24 475.8 V479.4 M569.70 475.8 V481.6 M577.16 475.8 V479.4 M584.62 475.8 V479.4 M592.08 475.8 V479.4 M599.54 475.8 V479.4 M607.00 475.8 V481.6 M614.46 475.8 V479.4 M621.92 475.8 V479.4 M629.38 475.8 V479.4 M636.84 475.8 V479.4 M644.30 475.8 V481.6" stroke="#333" stroke-width="0.8" fill="none"/><text x="234.5" y="488.8" text-anchor="middle" font-size="6.6" font-family="Liberation Serif,serif" fill="#555">30</text><text x="271.8" y="488.8" text-anchor="middle" font-size="6.6" font-family="Liberation Serif,serif" fill="#555">40</text><text x="309.1" y="488.8" text-anchor="middle" font-size="6.6" font-family="Liberation Serif,serif" fill="#555">50</text><text x="346.4" y="488.8" text-anchor="middle" font-size="6.6" font-family="Liberation Serif,serif" fill="#555">60</text><text x="383.7" y="488.8" text-anchor="middle" font-size="6.6" font-family="Liberation Serif,serif" fill="#555">70</text><text x="421.0" y="488.8" text-anchor="middle" font-size="6.6" font-family="Liberation Serif,serif" fill="#555">80</text><text x="458.3" y="488.8" text-anchor="middle" font-size="6.6" font-family="Liberation Serif,serif" fill="#555">90</text><text x="495.6" y="488.8" text-anchor="middle" font-size="6.6" font-family="Liberation Serif,serif" fill="#555">100</text><text x="532.9" y="488.8" text-anchor="middle" font-size="6.6" font-family="Liberation Serif,serif" fill="#555">110</text><text x="570.2" y="488.8" text-anchor="middle" font-size="6.6" font-family="Liberation Serif,serif" fill="#555">120</text><text x="607.5" y="488.8" text-anchor="middle" font-size="6.6" font-family="Liberation Serif,serif" fill="#555">130</text><text x="644.8" y="488.8" text-anchor="middle" font-size="6.6" font-family="Liberation Serif,serif" fill="#555">140</text><path d="M467 476 V490.8" stroke="#f06060" stroke-width="0.8"/><defs>
<linearGradient id="gL" gradientUnits="userSpaceOnUse" x1="228" y1="0" x2="338" y2="0">
 <stop offset="0" stop-color="#7a7a7a"/><stop offset="0.1" stop-color="#969696"/><stop offset="0.4" stop-color="#aeaeae"/><stop offset="0.7" stop-color="#c8c8c8"/><stop offset="1" stop-color="#cecece"/></linearGradient>
<linearGradient id="gR" gradientUnits="userSpaceOnUse" x1="477" y1="0" x2="578" y2="0">
 <stop offset="0" stop-color="#cdcdcd"/><stop offset="0.15" stop-color="#c6c6c6"/><stop offset="0.5" stop-color="#b6b6b6"/><stop offset="0.8" stop-color="#a4a4a4"/><stop offset="1" stop-color="#949494"/></linearGradient>
<linearGradient id="gRimL" gradientUnits="userSpaceOnUse" x1="0" y1="206" x2="0" y2="214">
 <stop offset="0" stop-color="#d2d2d2"/><stop offset="0.7" stop-color="#a8a8a8"/><stop offset="1" stop-color="#6a6a6a"/></linearGradient>
<linearGradient id="gMid" gradientUnits="userSpaceOnUse" x1="0" y1="215" x2="0" y2="250">
 <stop offset="0" stop-color="#d9d9d9"/><stop offset="0.5" stop-color="#dedede"/><stop offset="1" stop-color="#e3e3e3"/></linearGradient>
<linearGradient id="gStrip" gradientUnits="userSpaceOnUse" x1="340" y1="0" x2="474" y2="0">
 <stop offset="0" stop-color="#c8c8c8"/><stop offset="0.62" stop-color="#b4b4b4"/><stop offset="0.85" stop-color="#e4e4e4"/><stop offset="1" stop-color="#b0b0b0"/></linearGradient>
<linearGradient id="gWedge" gradientUnits="userSpaceOnUse" x1="472" y1="212" x2="446" y2="240">
 <stop offset="0" stop-color="#a0a0a0"/><stop offset="0.5" stop-color="#c2c2c2"/><stop offset="1" stop-color="#dcdcdc"/></linearGradient>
<radialGradient id="gHole" cx="0.45" cy="0.4" r="0.65"><stop offset="0" stop-color="#a9a3c1"/><stop offset="0.8" stop-color="#9d96b6"/><stop offset="1" stop-color="#8a83a4"/></radialGradient>
<linearGradient id="gPipe" x1="0" y1="0" x2="0" y2="1">
 <stop offset="0" stop-color="#56526c"/><stop offset="0.07" stop-color="#8781a1"/><stop offset="0.32" stop-color="#948dae"/><stop offset="0.58" stop-color="#7f7999"/><stop offset="0.84" stop-color="#5f5a77"/><stop offset="1" stop-color="#423e56"/></linearGradient>
<linearGradient id="gSh" gradientUnits="userSpaceOnUse" x1="0" y1="213" x2="0" y2="240">
 <stop offset="0" stop-color="#000" stop-opacity="0.27"/><stop offset="0.5" stop-color="#000" stop-opacity="0.06"/><stop offset="1" stop-color="#fff" stop-opacity="0.12"/></linearGradient>
<clipPath id="cBase"><path d="M298.5 359.5 H506.5 V368.7 H473.5 V375.4 H331.7 V368.7 H298.5 Z"/></clipPath>
<clipPath id="cBase2"><rect x="290" y="352" width="230" height="26"/></clipPath>
<filter id="bl" x="-5%" y="-5%" width="110%" height="110%"><feGaussianBlur stdDeviation="0.45"/></filter>
<filter id="bl2" x="-5%" y="-20%" width="110%" height="140%"><feGaussianBlur stdDeviation="0.9"/></filter>
</defs>
<g filter="url(#bl)">
<path d="M402.5 190 V211.5" stroke="#555" stroke-width="0.7"/>
<path d="M402.5 150.7 L392.6 190 H412.8 Z" fill="#000"/>
<path d="M228.6 207 L231 205.6 H301 L304 204.6 L309 205 L338.5 234.6 L332 243 H246 L229 249.5 Z" fill="url(#gL)"/>
<path d="M228.6 206.6 L231 205.4 H301 L304 204.4 L309.5 205 L312 207.5 L298 213.6 H231.5 L229.5 216 Z" fill="url(#gRimL)"/>
<path d="M229.5 215.5 L231.8 213.8 H298 L311 208.2" stroke="#4a4a4a" stroke-width="0.9" fill="none"/>
<path d="M229.5 215.5 L231.8 213.8 H298 L311 208.2 L338.5 234.6 L332 243 H246 L229 249.5 Z" fill="url(#gSh)"/>
<path d="M229 206.8 V216" stroke="#d4d4d4" stroke-width="1.2"/>
<path d="M229 249.4 L245.6 243 H290 L246 246.4 Z" fill="#5c5c5c"/>
<path d="M309 205.2 L320.4 207.6 L344 211.6 H372 V234.6 H338.5 Z" fill="#9c9c9c"/>
<rect x="345.0" y="212" width="1.3" height="22.6" fill="#c4c4c4"/>
<rect x="348.0" y="212" width="1.3" height="22.6" fill="#808080"/>
<rect x="351.0" y="212" width="1.3" height="22.6" fill="#c4c4c4"/>
<rect x="354.0" y="212" width="1.3" height="22.6" fill="#808080"/>
<rect x="357.0" y="212" width="1.3" height="22.6" fill="#c4c4c4"/>
<rect x="360.0" y="212" width="1.3" height="22.6" fill="#808080"/>
<rect x="363.0" y="212" width="1.3" height="22.6" fill="#c4c4c4"/>
<rect x="366.0" y="212" width="1.3" height="22.6" fill="#808080"/>
<rect x="369.0" y="212" width="1.3" height="22.6" fill="#c4c4c4"/>
<path d="M312 207.5 L344 212.2 L338 222 L333 229 Z" fill="#6e6e6e"/>
<path d="M318 210.5 L331 212.6 L326 218.8 Z M333.6 213.6 L338.5 214.2 L332 224 L329.6 221.2 Z" fill="#d4d4d4"/>
<path d="M310.5 206.8 L338.5 234.6" stroke="#3c3c3c" stroke-width="0.9"/>
<path d="M343.6 213 L340.5 233" stroke="#e0e0e0" stroke-width="1.2"/>
<path d="M277.4 220.5 Q279 219.4 280.4 221 L279.4 246.5 H273.4 Z" fill="#d6d6d6" stroke="#6c6c6c" stroke-width="0.5"/>
<rect x="340" y="211.2" width="138" height="4" fill="#9a9a9a"/>
<path d="M340 211.4 H470" stroke="#555" stroke-width="0.6"/>
<path d="M371 215 H478 V250 H332 V234.6 H372 Z" fill="url(#gMid)"/>
<path d="M369.6 214.4 L373.6 215.6 L382.4 231.5 V234.8 H356.6 Z" fill="#8c8c8c"/>
<path d="M373.6 215.6 H422" stroke="#7a7a7a" stroke-width="0.7"/>
<path d="M424.6 222.4 Q455 219 476.6 212.6 L478 240.5 H441 Z" fill="url(#gWedge)"/>
<path d="M372 216 L422 215.6 Q452 213.4 476.4 207.6 L476.8 213 Q452 219.6 424.6 222.2 Z" fill="#ececec"/>
<path d="M424.6 222.3 Q452 219.6 476.8 213" stroke="#5a5a5a" stroke-width="0.7" fill="none"/>
<path d="M422 215.6 Q452 213.4 476.4 207.6" stroke="#8a8a8a" stroke-width="0.6" fill="none"/>
<path d="M477.6 207 L488 205 H571 L574 204.2 L577.6 206 L578.4 249.5 L560 243 H477.6 Z" fill="url(#gR)"/>
<path d="M477.6 207 L488 205 H571 L574 204 L577.6 206 L572 209.6 L560 212.4 H489 L478 215 Z" fill="#d0d0d0"/>
<path d="M478 215.2 L489 212.6 H560 L572 209.8 L577.4 206.4" stroke="#6a6a6a" stroke-width="0.8" fill="none"/>
<path d="M478 215.2 L489 212.6 H560 L572 209.8 L577.4 206.4 L578.4 249.5 L560 243 H477.6 Z" fill="url(#gSh)"/>
<path d="M477.4 207 V216" stroke="#555" stroke-width="0.8"/>
<ellipse cx="501" cy="205.2" rx="4" ry="1" fill="#8a8a8a"/><ellipse cx="236" cy="205.6" rx="3.4" ry="0.9" fill="#8a8a8a"/>
<path d="M525.4 221 Q527.3 219.8 529 221.2 L531 246.5 H524.8 Z" fill="#d8d8d8" stroke="#6c6c6c" stroke-width="0.5"/>
<path d="M563 222.5 L576.6 210.5 L577.6 248 L562 240 Z" fill="#7e7e7e"/>
<path d="M567.5 222 L574.6 215.6 L574 233.6 L569.5 234 Z" fill="#e2e2e2"/><path d="M562 223.5 L565.6 221.4 L566.6 232.6 L563.4 233.4 Z" fill="#cfcfcf"/>
<path d="M578 206 L578.4 249.5" stroke="#555" stroke-width="0.7"/>
<path d="M332 234.8 H478" stroke="#909090" stroke-width="0.7"/>
<rect x="332" y="248.6" width="142" height="2.4" fill="#8e8e8e"/>
<rect x="340" y="251.4" width="134" height="5.8" fill="#fff"/>
<rect x="340" y="257.2" width="134" height="7.4" fill="url(#gStrip)"/>
<path d="M340 257.2 H474" stroke="#777" stroke-width="0.6"/>
<path d="M229 249.6 L246 243 H332 V256 H279.3 V258.5 L266 258.5 L262 256.6 H246 L243.6 258.6 H229 Z" fill="#a4a4a4"/>
<path d="M229.6 258.4 L243 246.6 H262 L246.5 258.4 Z" fill="#8a8a8a"/>
<path d="M245 249.8 H271.6 V258 H246.2 Q244 254 245 249.8 Z" fill="#c9c9c9" stroke="#5e5e5e" stroke-width="0.5"/>
<path d="M272 247 H288 L283 256.6 H274 Z" fill="#bcbcbc"/>
<path d="M298.4 246.2 H320.6 L313 256.4 H291.6 Z" fill="#d2d2d2" stroke="#666" stroke-width="0.5"/>
<path d="M243.4 243 H332 V246.8 H240 Z" fill="#747474"/>
<path d="M229 258.6 H279" stroke="#666" stroke-width="0.6"/>
<rect x="234.4" y="258.6" width="5.2" height="10.4" fill="#dcdcdc" stroke="#8a8a8a" stroke-width="0.5"/>
<rect x="241.6" y="258.6" width="11" height="9" fill="#d0d0d0" stroke="#8a8a8a" stroke-width="0.5"/><rect x="253" y="258.6" width="12.6" height="9" fill="#b8b8b8"/>
<rect x="266" y="258.6" width="5.6" height="10.4" fill="#e2e2e2" stroke="#8a8a8a" stroke-width="0.5"/><rect x="273.6" y="258.6" width="5.6" height="10.4" fill="#d6d6d6" stroke="#8a8a8a" stroke-width="0.4"/>
<rect x="305.6" y="256" width="4.4" height="10.8" fill="#bcbcbc" stroke="#666" stroke-width="0.5"/>
<rect x="474" y="240.5" width="60" height="15.4" fill="#b2b2b2"/>
<path d="M474 240.6 V256" stroke="#5e5e5e" stroke-width="0.6"/>
<path d="M474 243 H560 L578.4 249.6 V258.6 H563 L560.6 256.6 H543 L539 258.6 H526 V256 H474 Z" fill="#a6a6a6"/>
<path d="M474 243 H561 L566 246.8 H474 Z" fill="#7c7c7c"/>
<path d="M511 246 H548 L560 256.4 H520 Z" fill="#8e8e8e"/>
<path d="M513 247.4 H533 L531 256 H517 Z" fill="#c4c4c4"/>
<path d="M535 250.4 H558.6 Q560 253.6 558.6 257 H535 Z" fill="#cdcdcd" stroke="#5e5e5e" stroke-width="0.5"/>
<path d="M560 243.2 L578 249.6 V258.4 L562 258.4 Z" fill="#8a8a8a"/>
<path d="M526 258.6 H578" stroke="#666" stroke-width="0.6"/>
<rect x="526.6" y="258.6" width="5.8" height="9.8" fill="#dedede" stroke="#8a8a8a" stroke-width="0.5"/><rect x="534.6" y="258.6" width="5.2" height="9.8" fill="#d2d2d2" stroke="#8a8a8a" stroke-width="0.4"/>
<rect x="541.6" y="258.6" width="24" height="8.4" fill="#d4d4d4" stroke="#8a8a8a" stroke-width="0.5"/><path d="M546 258.6 H556 L559 267 H548 Z" fill="#b6b6b6"/>
<rect x="566" y="258.6" width="5" height="9.8" fill="#d8d8d8" stroke="#8a8a8a" stroke-width="0.5"/>
<path d="M233.5 267.4 H570.6 L568.7 285.3 L567.5 292.3 L575.3 293.5 L580.4 318.2 L566.8 327.6 L571.5 354 H579 Q580.4 354 580.4 355.4 V362.6 Q580.4 364 579 364 H556.5 L554 354.6 H532.3 L530.6 364 H298 H274.6 L273 354.6 H250.4 L248.8 364 H226.6 Q225.2 364 225.2 362.6 V354.8 Q225.2 353.4 226.6 353.4 H233.5 L238.7 326 L225.3 319.3 L230 293.5 L238.2 293.5 L238 285 Z" fill="#8aa0b1" stroke="#4c5a66" stroke-width="0.6" stroke-linejoin="round"/>
<ellipse cx="228.8" cy="306.4" rx="0.9" ry="2" fill="#333"/><ellipse cx="577.2" cy="307" rx="0.9" ry="2" fill="#333"/>
<path d="M279.3 257 H340 V264.6 H474 V256.2 H526.2 V289.6 H279.3 Z" fill="#e7e7e7"/>
<rect x="279.3" y="283.6" width="246.9" height="6" fill="#c6c6c6"/>
<path d="M279.3 257 V289.6 H526.2 V256.2" stroke="#5a5a5a" stroke-width="0.7" fill="none"/>
<path d="M279.3 283.8 H526.2" stroke="#808080" stroke-width="0.6"/>
<path d="M279.3 257 H340 M474 256.2 H526" stroke="#7a7a7a" stroke-width="0.6"/>
<path d="M229.4 258.6 H234 L229.6 284.4 L233.4 285.2 Q235.6 287.6 233.4 290 L222 290 Q219 288 220.8 285.6 L224.2 284.8 Z" fill="#f2f2f2" stroke="#8a8a8a" stroke-width="0.6"/>
<path d="M576.6 258.6 H572 L576.4 284.4 L570.6 285.2 Q568 287.6 570.6 290 L583.4 290 Q586.4 288 584.6 285.6 L581.6 284.8 Z" fill="#f2f2f2" stroke="#8a8a8a" stroke-width="0.6"/>
<path d="M346 356 Q345.6 350.6 352.5 347 L477.6 296 Q481 294.6 485 294.6 H543 Q557.6 296.6 557.6 308.6 Q557.2 316.6 547 320.4 L443 363.6 H348 Z" fill="#8399ab" stroke="#2e3840" stroke-width="0.7"/>
<path d="M259.7 299.5 V294.4 Q259.7 290.6 264 290.6 Q268.3 290.6 268.3 294.4 V299.5 Z" fill="#fff" stroke="#4a4a4a" stroke-width="0.6"/>
<circle cx="264" cy="308.8" r="11" fill="url(#gHole)" stroke="#5e5a70" stroke-width="0.5"/>
<path d="M318.0 299.5 V294.4 Q318.0 290.6 322.3 290.6 Q326.6 290.6 326.6 294.4 V299.5 Z" fill="#fff" stroke="#4a4a4a" stroke-width="0.6"/>
<circle cx="322.3" cy="308.8" r="11" fill="url(#gHole)" stroke="#5e5a70" stroke-width="0.5"/>
<path d="M478.8 299.5 V294.4 Q478.8 290.6 483 290.6 Q487.2 290.6 487.2 294.4 V299.5 Z" fill="#fff" stroke="#4a4a4a" stroke-width="0.6"/>
<path d="M537.0 299.5 V294.4 Q537.0 290.6 541.2 290.6 Q545.4000000000001 290.6 545.4000000000001 294.4 V299.5 Z" fill="#fff" stroke="#4a4a4a" stroke-width="0.6"/>
<path d="M331.7 375.6 H473.5 V384 H331.7 Z" fill="#b9ae9b" stroke="#7e7668" stroke-width="0.5"/>
<rect x="343" y="383.8" width="119.8" height="10.6" fill="#383838"/>
<path d="M298.5 359.5 H506.5 V368.7 H473.5 V375.4 H331.7 V368.7 H298.5 Z" fill="#b3a592" stroke="#e02020" stroke-width="0.8"/>
<circle cx="388" cy="362.6" r="9.6" fill="#4d4861" stroke="#e02020" stroke-width="0.8" clip-path="url(#cBase2)"/>
<ellipse cx="389.6" cy="361.6" rx="2.4" ry="1.5" fill="#8a84a2" transform="rotate(-25 389.6 361.6)"/>
<circle cx="446" cy="362.6" r="9.6" fill="#4d4861" stroke="#e02020" stroke-width="0.8" clip-path="url(#cBase2)"/>
<ellipse cx="447.6" cy="361.6" rx="2.4" ry="1.5" fill="#8a84a2" transform="rotate(-25 447.6 361.6)"/>
<g clip-path="url(#cBase)">
<g transform="translate(358.1 359.8) rotate(-22.77)"><rect x="-11.700000000000001" y="-11.700000000000001" width="159.3" height="23.400000000000002" rx="11.700000000000001" fill="#e02020" /></g>
<g transform="translate(416.5 360.6) rotate(-22.39)"><rect x="-11.700000000000001" y="-11.700000000000001" width="161.5" height="23.400000000000002" rx="11.700000000000001" fill="#e02020" /></g>
</g>
<g transform="translate(416.5 360.6) rotate(-22.39)"><rect x="-10.8" y="-10.8" width="159.7" height="21.6" rx="10.8" fill="url(#gPipe)" /></g>
<g transform="translate(358.1 359.8) rotate(-22.77)"><rect x="-10.8" y="-10.8" width="157.5" height="21.6" rx="10.8" fill="url(#gPipe)" /></g>
</g>
<path d="M402.8 356 V379" stroke="#3a8ee8" stroke-width="0.7"/>
<rect x="298.6" y="364.5" width="6" height="6" fill="#1c86ea"/>
<rect x="399.8" y="353.4" width="6" height="6" fill="#1c86ea"/>
<rect x="399.8" y="365.0" width="6" height="6" fill="#1c86ea"/>
<rect x="399.8" y="375.7" width="6" height="6" fill="#1c86ea"/>
<rect x="500.6" y="365.0" width="6" height="6" fill="#1c86ea"/>
<path d="M298.8 358 V393 M285 376.2 H314.5" stroke="#f820f8" stroke-width="0.8"/>
<path d="M286 366.5 Q279.5 376 286 385.5" stroke="#f820f8" stroke-width="0.7" fill="none"/>
<path d="M287 364.6 L285.6 369.4 L283.4 367.2 Z M287 387.6 L283.4 385 L285.6 382.8 Z" fill="#f820f8"/><rect x="610.8" y="141.3" width="23" height="23" fill="#f8f8f8" stroke="#dcdcdc" stroke-width="0.8"/><text x="622.3" y="157.2" text-anchor="middle" font-size="12.6" font-family="Liberation Sans,sans-serif" fill="#111">F</text><g fill="#fff" stroke="#d4d4d4" stroke-width="0.8"><path d="M618 131.6 H627 L622.5 137.8 Z"/><path d="M618 173.6 H627 L622.5 167.4 Z"/><path d="M602 148 V158 L607.6 153 Z"/><path d="M643.6 148 V158 L637.6 153 Z"/><path d="M622.4 180.6 L628.6 187.2 H625.6 V192.6 H628 V195.2 H633.4 V192 L639.8 198.2 L633.4 204.4 V201.2 H628 V203.8 H625.6 V209.2 H628.6 L622.4 215.6 L616.2 209.2 H619.2 V203.8 H616.8 V201.2 H611.4 V204.4 L605.2 198.2 L611.4 192 V195.2 H616.8 V192.6 H619.2 V187.2 H616.2 Z"/><rect x="617" y="192.8" width="10.8" height="10.8" rx="1"/><rect x="621" y="231" width="3" height="81" stroke="none" fill="#e2e2e2"/><rect x="617" y="220.4" width="11.3" height="11.4" rx="2"/><rect x="617" y="297" width="11.3" height="6" rx="3"/><rect x="617" y="311.3" width="11.3" height="11" rx="2"/></g><path d="M619.6 226.1 H625.7 M622.65 223 V229.2 M619.8 316.8 H625.6" stroke="#c4c4c4" stroke-width="0.8"/><circle cx="622.4" cy="198.2" r="0.7" fill="#999"/><g fill="none" stroke="#aaa" stroke-width="0.6"><circle cx="288" cy="410.5" r="1.2"/><circle cx="418.2" cy="410.5" r="1.2"/><circle cx="531.8" cy="410.5" r="1.2"/></g><path d="M235.3 424 V441 H252" stroke="#555" stroke-width="0.7" fill="none"/><text x="233.4" y="420.6" font-size="6.4" font-family="Liberation Serif,serif" fill="#333">Y</text><text x="255.6" y="443.2" font-size="6.4" font-family="Liberation Serif,serif" fill="#333">X</text></svg>
<span class="t b" style="top:114.3px;color:#222;left:207.0px;">ET Project</span>
<svg class="r" style="left:244.8px;top:114.2px" width="6" height="6" viewBox="0 0 6 6"><path d="M1 1 L4.6 4.6 M4.6 1 L1 4.6" stroke="#222" stroke-width="1"/></svg>
<span class="t " style="top:114.5px;color:#444;left:656.7px;">Solid Obstruction Property Sheet</span>
<svg class="r" style="left:896.0px;top:111.6px" width="20" height="8" viewBox="0 0 20 8"><rect x="2.6" y="2.6" width="3.2" height="3.4" fill="#333"/><rect x="3.6" y="1.4" width="3.2" height="3.4" fill="none" stroke="#333" stroke-width="0.6"/><path d="M12 1.8 L15.5 5.6 M15.5 1.8 L12 5.6" stroke="#222" stroke-width="1"/></svg>
<div class="r" style="left:653.3px;top:123.0px;width:0.7px;height:356.6px;background:#c4c4c4;"></div>
<div class="r" style="left:653.3px;top:479.2px;width:261.7px;height:0.7px;background:#c8c8c8;"></div>
<div class="r" style="left:742.0px;top:122.8px;width:43.0px;height:12.8px;background:#6d9fdc;border:0.6px solid #5a8ccc;"></div>
<span class="t " style="top:126.5px;color:#1c3c78;left:663.5px;width:200px;text-align:center;">Properties</span>
<div class="r" style="left:785.0px;top:122.8px;width:41.6px;height:12.8px;background:#eef1f9;border:0.7px solid #c4c8d0;"></div>
<span class="t " style="top:126.5px;color:#444;left:705.6px;width:200px;text-align:center;">Results</span>
<div class="r" style="left:905.2px;top:135.8px;width:9.2px;height:343.6px;background:#f1f1f4;border:0.6px solid #c8c8cc;"></div>
<div class="r" style="left:905.2px;top:135.8px;width:9.2px;height:9.2px;background:#fafafa;border:0.6px solid #c4c4c8;"></div>
<svg class="r" style="left:905.2px;top:136.5px" width="9" height="8" viewBox="0 0 9 8"><path d="M3 5 H6.2 L4.6 3 Z" fill="#888"/></svg>
<div class="r" style="left:905.2px;top:470.6px;width:9.2px;height:8.8px;background:#fafafa;border:0.6px solid #c4c4c8;"></div>
<svg class="r" style="left:905.2px;top:471.0px" width="9" height="8" viewBox="0 0 9 8"><path d="M3 3.2 H6.2 L4.6 5.2 Z" fill="#888"/></svg>
<span class="t b" style="top:142.1px;color:#222;right:171.7px;">Installed</span>
<div class="r" style="left:759.0px;top:141.1px;width:7.6px;height:7.6px;background:#fff;border:0.7px solid #a8a8a8;"></div>
<svg class="r" style="left:759.0px;top:141.0px" width="8" height="8" viewBox="0 0 8 8"><path d="M1.6 4.6 L3 6.2 L6.2 1.6" stroke="#333" stroke-width="0.8" fill="none"/></svg>
<div class="r" style="left:657.0px;top:154.3px;width:4.0px;height:0.7px;background:#b2c9e6;"></div>
<svg class="r" style="left:663.0px;top:151.7px" width="5" height="6" viewBox="0 0 5 6"><path d="M1.2 0.6 V5 L3.8 2.8 Z" fill="#222"/></svg>
<span class="t b" style="top:151.6px;color:#222;left:669.3px;">Identification</span>
<div class="r" style="left:722.5px;top:154.3px;width:180.3px;height:0.7px;background:#b2c9e6;"></div>
<div class="r" style="left:657.0px;top:165.4px;width:4.0px;height:0.7px;background:#b2c9e6;"></div>
<svg class="r" style="left:663.0px;top:163.2px" width="5" height="5" viewBox="0 0 5 5"><path d="M0.4 1.2 H4.4 L2.4 3.8 Z" fill="#222"/></svg>
<span class="t b" style="top:162.7px;color:#222;left:669.3px;">Geometry</span>
<div class="r" style="left:702.5px;top:165.4px;width:200.3px;height:0.7px;background:#b2c9e6;"></div>
<span class="t b" style="top:177.3px;color:#222;right:171.7px;">Shape</span>
<div class="r" style="left:759.0px;top:173.6px;width:139.4px;height:12.0px;background:#f3f4f9;border:0.7px solid #c6c6cc;"></div>
<span class="t b" style="top:176.9px;color:#222;left:772.6px;">Solid Definition</span>
<svg class="r" style="left:890.0px;top:177.6px" width="6" height="5" viewBox="0 0 6 5"><path d="M0.8 1 H5 L2.9 3.6 Z" fill="#222"/></svg>
<svg class="r" style="left:762.4px;top:175.6px" width="8" height="8" viewBox="0 0 8 8"><path d="M4 0.4 L7.6 4 L4 7.6 L0.4 4 Z" fill="#333"/><path d="M4 2 V6 M2 4 H6" stroke="#fff" stroke-width="0.8"/></svg>
<div class="r" style="left:693.8px;top:188.3px;width:112.4px;height:12.3px;border:1.7px solid #f62424;"></div>
<span class="t b" style="top:191.9px;color:#222;right:171.7px;">Solid Definition</span>
<span class="t b" style="top:191.9px;color:#222;left:759.3px;">Base-Body 0</span>
<div class="r" style="left:823.7px;top:188.8px;width:61.9px;height:11.5px;background:#eff1f8;border:0.7px solid #c6c6cc;"></div>
<span class="t " style="top:191.9px;color:#666;left:754.6px;width:200px;text-align:center;">Select...</span>
<div class="r" style="left:888.0px;top:188.8px;width:10.4px;height:11.5px;background:#f3f4f9;border:0.7px solid #c6c6cc;"></div>
<svg class="r" style="left:889.2px;top:190.6px" width="8" height="8" viewBox="0 0 8 8"><path d="M2 7 V3.6 Q2 1.6 4 1.6 H6.6 V4.4 H4.6 V7 Z" fill="#123a9a"/><path d="M5.2 0.6 L7.8 3 L5.2 5.4 Z" fill="#123a9a"/></svg>
<span class="t b" style="top:203.9px;color:#222;right:171.7px;">Realign Origin</span>
<div class="r" style="left:759.0px;top:202.9px;width:7.6px;height:7.6px;background:#fff;border:0.7px solid #a8a8a8;"></div>
<span class="t b" style="top:214.1px;color:#222;right:171.7px;">Ignore Collision Detection</span>
<div class="r" style="left:759.0px;top:213.1px;width:7.6px;height:7.6px;background:#fff;border:0.7px solid #a8a8a8;"></div>
<svg class="r" style="left:759.0px;top:213.0px" width="8" height="8" viewBox="0 0 8 8"><path d="M1.6 4.6 L3 6.2 L6.2 1.6" stroke="#333" stroke-width="0.8" fill="none"/></svg>
<div class="r" style="left:657.8px;top:224.2px;width:244.0px;height:21.0px;border:0.7px solid #b4cbe8;"></div>
<div class="r" style="left:667.5px;top:222.0px;width:17.3px;height:5.0px;background:#fff;"></div>
<span class="t " style="top:221.7px;color:#555;left:669.3px;">Grid</span>
<span class="t b" style="top:233.8px;color:#222;right:171.7px;">Minimum Cell Size</span>
<div class="r" style="left:757.4px;top:231.0px;width:102.4px;height:11.4px;background:#fff;border:0.7px solid #c4c4c4;"></div>
<span class="t b" style="top:234.0px;color:#222;left:759.0px;">0.2</span>
<div class="r" style="left:861.8px;top:231.0px;width:22.2px;height:11.4px;background:#f3f4f9;border:0.7px solid #c6c6cc;"></div>
<span class="t b" style="top:234.0px;color:#222;left:864.4px;">mm</span>
<svg class="r" style="left:875.6px;top:234.7px" width="6" height="5" viewBox="0 0 6 5"><path d="M0.8 1 H5 L2.9 3.6 Z" fill="#222"/></svg>
<div class="r" style="left:888.0px;top:231.0px;width:10.4px;height:11.4px;background:#f3f4f9;border:0.7px solid #c6c6cc;"></div>
<svg class="r" style="left:889.2px;top:232.7px" width="8" height="8" viewBox="0 0 8 8"><path d="M1 3 H6 M4.6 1.4 L6.4 3 L4.6 4.6 M7 5.2 H2 M3.4 3.8 L1.6 5.2 L3.4 6.8" stroke="#333" stroke-width="0.8" fill="none"/></svg>
<span class="t b" style="top:251.7px;color:#222;right:171.7px;">Surface Area</span>
<div class="r" style="left:759.0px;top:248.6px;width:101.6px;height:10.9px;background:#fff;border:0.7px solid #c4c4c4;"></div>
<span class="t " style="top:251.3px;color:#b0b0b0;left:760.6px;">9001</span>
<div class="r" style="left:862.3px;top:248.6px;width:23.3px;height:10.9px;background:#f3f4f9;border:0.7px solid #c6c6cc;"></div>
<span class="t " style="top:251.3px;color:#b0b0b0;left:864.9px;">cm²</span>
<svg class="r" style="left:877.2px;top:252.1px" width="6" height="5" viewBox="0 0 6 5"><path d="M0.8 1 H5 L2.9 3.6 Z" fill="#aaa"/></svg>
<div class="r" style="left:888.0px;top:248.6px;width:10.4px;height:10.9px;background:#f3f4f9;border:0.7px solid #c6c6cc;"></div>
<svg class="r" style="left:889.2px;top:250.1px" width="8" height="8" viewBox="0 0 8 8"><path d="M1 3 H6 M4.6 1.4 L6.4 3 L4.6 4.6 M7 5.2 H2 M3.4 3.8 L1.6 5.2 L3.4 6.8" stroke="#333" stroke-width="0.8" fill="none"/></svg>
<div class="r" style="left:657.0px;top:268.5px;width:4.0px;height:0.7px;background:#b2c9e6;"></div>
<svg class="r" style="left:663.0px;top:265.9px" width="5" height="6" viewBox="0 0 5 6"><path d="M1.2 0.6 V5 L3.8 2.8 Z" fill="#222"/></svg>
<span class="t b" style="top:265.8px;color:#222;left:669.3px;">Placement</span>
<div class="r" style="left:705.5px;top:268.5px;width:197.3px;height:0.7px;background:#b2c9e6;"></div>
<div class="r" style="left:657.0px;top:279.8px;width:4.0px;height:0.7px;background:#b2c9e6;"></div>
<svg class="r" style="left:663.0px;top:277.6px" width="5" height="5" viewBox="0 0 5 5"><path d="M0.4 1.2 H4.4 L2.4 3.8 Z" fill="#222"/></svg>
<span class="t b" style="top:277.1px;color:#222;left:669.3px;">Cooling</span>
<div class="r" style="left:698.5px;top:279.8px;width:204.3px;height:0.7px;background:#b2c9e6;"></div>
<span class="t b" style="top:291.1px;color:#222;right:171.7px;">Modelling Detail</span>
<div class="r" style="left:759.0px;top:288.3px;width:139.4px;height:10.9px;background:#f3f4f9;border:0.7px solid #c6c6cc;"></div>
<span class="t b" style="top:291.1px;color:#222;left:761.6px;">Full</span>
<svg class="r" style="left:890.0px;top:291.8px" width="6" height="5" viewBox="0 0 6 5"><path d="M0.8 1 H5 L2.9 3.6 Z" fill="#222"/></svg>
<span class="t b" style="top:302.9px;color:#222;right:171.7px;">Heat Conduction Grid</span>
<div class="r" style="left:759.0px;top:301.9px;width:7.6px;height:7.6px;background:#fff;border:0.7px solid #a8a8a8;"></div>
<svg class="r" style="left:759.0px;top:301.8px" width="8" height="8" viewBox="0 0 8 8"><path d="M1.6 4.6 L3 6.2 L6.2 1.6" stroke="#333" stroke-width="0.8" fill="none"/></svg>
<span class="t b" style="top:315.2px;color:#222;right:171.7px;">Heat Option</span>
<div class="r" style="left:759.0px;top:312.8px;width:139.4px;height:10.5px;background:#f3f4f9;border:0.7px solid #c6c6cc;"></div>
<span class="t b" style="top:315.4px;color:#222;left:761.6px;">Total Heat</span>
<svg class="r" style="left:890.0px;top:316.1px" width="6" height="5" viewBox="0 0 6 5"><path d="M0.8 1 H5 L2.9 3.6 Z" fill="#222"/></svg>
<span class="t b" style="top:329.8px;color:#222;right:171.7px;">Heat Dissipated</span>
<div class="r" style="left:759.0px;top:327.1px;width:83.4px;height:10.3px;background:#fff;border:0.7px solid #c4c4c4;"></div>
<span class="t b" style="top:329.6px;color:#222;left:760.6px;">0</span>
<div class="r" style="left:844.0px;top:327.1px;width:41.6px;height:10.3px;background:#f3f4f9;border:0.7px solid #c6c6cc;"></div>
<span class="t b" style="top:329.6px;color:#222;left:846.6px;">W</span>
<svg class="r" style="left:877.2px;top:330.2px" width="6" height="5" viewBox="0 0 6 5"><path d="M0.8 1 H5 L2.9 3.6 Z" fill="#222"/></svg>
<div class="r" style="left:888.0px;top:327.1px;width:10.4px;height:10.3px;background:#f3f4f9;border:0.7px solid #c6c6cc;"></div>
<svg class="r" style="left:889.2px;top:328.2px" width="8" height="8" viewBox="0 0 8 8"><path d="M1 3 H6 M4.6 1.4 L6.4 3 L4.6 4.6 M7 5.2 H2 M3.4 3.8 L1.6 5.2 L3.4 6.8" stroke="#333" stroke-width="0.8" fill="none"/></svg>
<span class="t b" style="top:343.9px;color:#222;right:171.7px;">Material</span>
<span class="t b" style="top:343.9px;color:#222;left:759.3px;">Copper, Pure</span>
<div class="r" style="left:823.7px;top:341.0px;width:61.9px;height:10.7px;background:#eff1f8;border:0.7px solid #c6c6cc;"></div>
<span class="t " style="top:343.7px;color:#555;left:754.6px;width:200px;text-align:center;">Select...</span>
<div class="r" style="left:888.0px;top:341.0px;width:10.4px;height:10.7px;background:#f3f4f9;border:0.7px solid #c6c6cc;"></div>
<svg class="r" style="left:889.2px;top:342.4px" width="8" height="8" viewBox="0 0 8 8"><path d="M2 7 V3.6 Q2 1.6 4 1.6 H6.6 V4.4 H4.6 V7 Z" fill="#123a9a"/><path d="M5.2 0.6 L7.8 3 L5.2 5.4 Z" fill="#123a9a"/></svg>
<span class="t b" style="top:358.0px;color:#222;right:171.7px;">Calculated Weight</span>
<div class="r" style="left:759.0px;top:355.4px;width:100.0px;height:10.4px;background:#fff;border:0.7px solid #c4c4c4;"></div>
<span class="t " style="top:357.9px;color:#b0b0b0;left:760.6px;">78.3</span>
<div class="r" style="left:861.0px;top:355.4px;width:24.6px;height:10.4px;background:#f3f4f9;border:0.7px solid #c6c6cc;"></div>
<span class="t " style="top:357.9px;color:#b0b0b0;left:863.6px;">g</span>
<svg class="r" style="left:877.2px;top:358.6px" width="6" height="5" viewBox="0 0 6 5"><path d="M0.8 1 H5 L2.9 3.6 Z" fill="#aaa"/></svg>
<div class="r" style="left:888.0px;top:355.4px;width:10.4px;height:10.4px;background:#f3f4f9;border:0.7px solid #c6c6cc;"></div>
<svg class="r" style="left:889.2px;top:356.6px" width="8" height="8" viewBox="0 0 8 8"><path d="M1 3 H6 M4.6 1.4 L6.4 3 L4.6 4.6 M7 5.2 H2 M3.4 3.8 L1.6 5.2 L3.4 6.8" stroke="#333" stroke-width="0.8" fill="none"/></svg>
<div class="r" style="left:657.0px;top:375.0px;width:4.0px;height:0.7px;background:#b2c9e6;"></div>
<svg class="r" style="left:663.0px;top:372.4px" width="5" height="6" viewBox="0 0 5 6"><path d="M1.2 0.6 V5 L3.8 2.8 Z" fill="#222"/></svg>
<span class="t b" style="top:372.3px;color:#222;left:669.3px;">Display Options</span>
<div class="r" style="left:725.5px;top:375.0px;width:177.3px;height:0.7px;background:#b2c9e6;"></div>
<div class="r" style="left:654.0px;top:479.8px;width:54.6px;height:11.0px;background:#cdcdcd;"></div>
<span class="t b" style="top:482.1px;color:#333;left:660.7px;">Object Panel</span>
<span class="t b" style="top:482.1px;color:#333;left:715.2px;">Solid Obstruction Property Sheet</span>
<div class="r" style="left:830.0px;top:480.0px;width:85.0px;height:11.0px;background:#fff;border:0.7px solid #c8c8c8;"></div>
</body></html>
